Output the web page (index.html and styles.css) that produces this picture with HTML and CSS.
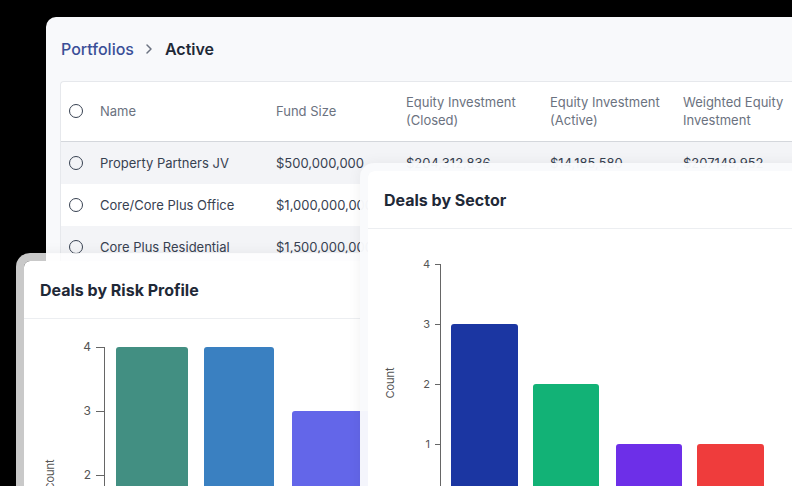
FILE: index.html
```html
<!DOCTYPE html>
<html lang="en">
<head>
  <meta charset="UTF-8" />
  <meta name="viewport" content="width=device-width, initial-scale=1" />
  <title>Portfolios</title>
  <link rel="stylesheet" href="styles.css">
</head>
<body>
  <div class="stage">

    <!-- Portfolio table window -->
    <div class="window">
      <div class="crumbs">
        <span class="crumb-link">Portfolios</span>
        <svg class="chevron" width="10" height="12" viewBox="0 0 10 12"><path d="M3 2l4 4-4 4" fill="none" stroke="#6b7280" stroke-width="1.5" stroke-linecap="round" stroke-linejoin="round"/></svg>
        <span class="crumb-current">Active</span>
      </div>
      <div class="table">
        <div class="row head">
          <div class="cell"><span class="radio"></span></div>
          <div class="cell">Name</div>
          <div class="cell">Fund Size</div>
          <div class="cell">Equity Investment<br>(Closed)</div>
          <div class="cell">Equity Investment<br>(Active)</div>
          <div class="cell">Weighted Equity<br>Investment</div>
        </div>
        <div class="row shade">
          <div class="cell"><span class="radio"></span></div>
          <div class="cell">Property Partners JV</div>
          <div class="cell">$500,000,000</div>
          <div class="cell">$204,312,836</div>
          <div class="cell">$14,185,580</div>
          <div class="cell">$207149,952</div>
        </div>
        <div class="row">
          <div class="cell"><span class="radio"></span></div>
          <div class="cell">Core/Core Plus Office</div>
          <div class="cell">$1,000,000,000</div>
          <div class="cell">$96,400,000</div>
          <div class="cell">$8,200,000</div>
          <div class="cell">$98,120,000</div>
        </div>
        <div class="row shade">
          <div class="cell"><span class="radio"></span></div>
          <div class="cell">Core Plus Residential</div>
          <div class="cell">$1,500,000,000</div>
          <div class="cell">$310,000,000</div>
          <div class="cell">$22,500,000</div>
          <div class="cell">$318,400,000</div>
        </div>
      </div>
    </div>

    <!-- Deals by Risk Profile -->
    <div class="card card-risk">
      <div class="card-head">Deals by Risk Profile</div>
      <svg class="chart" width="360" height="200" viewBox="0 0 360 200">
        <text class="axis-title" transform="translate(30 156) rotate(-90)" text-anchor="middle">Count</text>
        <line x1="80.5" y1="28" x2="80.5" y2="200" stroke="#666" />
        <line x1="72" y1="28.5" x2="80" y2="28.5" stroke="#666" />
        <line x1="72" y1="92.5" x2="80" y2="92.5" stroke="#666" />
        <line x1="72" y1="156.5" x2="80" y2="156.5" stroke="#666" />
        <text class="tick big" x="67" y="32" text-anchor="end">4</text>
        <text class="tick big" x="67" y="96" text-anchor="end">3</text>
        <text class="tick big" x="67" y="160" text-anchor="end">2</text>
        <rect x="92" y="28" width="72" height="200" rx="3" fill="#428f82" />
        <rect x="180" y="28" width="70" height="200" rx="3" fill="#3a80c1" />
        <rect x="268" y="92" width="80" height="200" rx="3" fill="#6366e9" />
      </svg>
    </div>

    <!-- Deals by Sector -->
    <div class="card card-sector">
      <div class="card-head">Deals by Sector</div>
      <svg class="chart" width="440" height="270" viewBox="0 0 440 270">
        <text class="axis-title" transform="translate(26 154) rotate(-90)" text-anchor="middle">Count</text>
        <line x1="72.5" y1="35" x2="72.5" y2="270" stroke="#666" />
        <line x1="67" y1="35.5" x2="72" y2="35.5" stroke="#666" />
        <line x1="67" y1="95.5" x2="72" y2="95.5" stroke="#666" />
        <line x1="67" y1="155.5" x2="72" y2="155.5" stroke="#666" />
        <line x1="67" y1="215.5" x2="72" y2="215.5" stroke="#666" />
        <text class="tick" x="62" y="39" text-anchor="end">4</text>
        <text class="tick" x="62" y="99" text-anchor="end">3</text>
        <text class="tick" x="62" y="159" text-anchor="end">2</text>
        <text class="tick" x="62" y="219" text-anchor="end">1</text>
        <rect x="83" y="95" width="67" height="200" rx="3" fill="#1b36a2" />
        <rect x="165" y="155" width="66" height="200" rx="3" fill="#12b276" />
        <rect x="248" y="215" width="66" height="200" rx="3" fill="#6d2fe8" />
        <rect x="329" y="215" width="67" height="200" rx="3" fill="#ef3c3c" />
      </svg>
    </div>

  </div>
</body>
</html>
```

FILE: styles.css
```css
body {
  margin: 0;
  background: #000;
  font-family: Inter, "Noto Sans", sans-serif;
  overflow: hidden;
}
.stage {
  position: relative;
  width: 792px;
  height: 486px;
  overflow: hidden;
}

/* table window */
.window {
  position: absolute;
  left: 46px;
  top: 17px;
  width: 800px;
  height: 520px;
  background: #f8f9fb;
  border-radius: 10px 0 0 0;
  padding-left: 14px;
  box-sizing: border-box;
}
.crumbs {
  height: 64px;
  display: flex;
  align-items: center;
  gap: 10px;
  padding-left: 1px;
}
.crumb-link {
  color: #3a4f97;
  font-size: 16px;
  font-weight: 500;
}
.crumb-current {
  color: #1f2937;
  font-size: 16px;
  font-weight: 600;
}
.chevron {
  margin-right: 1px;
}
.table {
  background: #fff;
  border-left: 1px solid #e6e8ec;
  border-top: 1px solid #e6e8ec;
  border-radius: 4px 0 0 0;
}
.row {
  display: grid;
  grid-template-columns: 39px 176px 130px 144px 133px 1fr;
  height: 42px;
  align-items: center;
  font-size: 13px;
  color: #374151;
  padding-bottom: 1px;
  box-sizing: border-box;
}
.row.head {
  height: 60px;
  padding-bottom: 2px;
  border-bottom: 1px solid #d4d7dc;
  color: #6b7280;
  line-height: 18px;
}
.row.shade {
  background: #f3f4f7;
}
.cell {
  white-space: nowrap;
}
.radio {
  display: block;
  width: 14px;
  height: 14px;
  margin-left: 8px;
  border: 1.6px solid #374151;
  border-radius: 50%;
  box-sizing: border-box;
}

/* chart cards */
.card {
  position: absolute;
  background: #fff;
  background-clip: padding-box;
  border-radius: 14px;
  box-shadow: 0 0 14px rgba(15, 23, 42, 0.06);
  overflow: hidden;
}
.card-risk {
  left: 16px;
  top: 253px;
  width: 360px;
  height: 260px;
  border: 8px solid rgba(255, 255, 255, 0.79);
}
.card-sector {
  left: 360px;
  top: 163px;
  width: 460px;
  height: 340px;
  border: 8px solid rgba(249, 250, 252, 0.97);
}
.card-head {
  height: 57px;
  border-bottom: 1px solid #eceef1;
  display: flex;
  align-items: center;
  padding-left: 16px;
  font-size: 16px;
  font-weight: 700;
  color: #1f2937;
}
.chart {
  display: block;
}
.tick {
  font-size: 11px;
  fill: #555;
}
.tick.big {
  font-size: 12px;
}
.axis-title {
  font-size: 11px;
  fill: #555;
}
```
